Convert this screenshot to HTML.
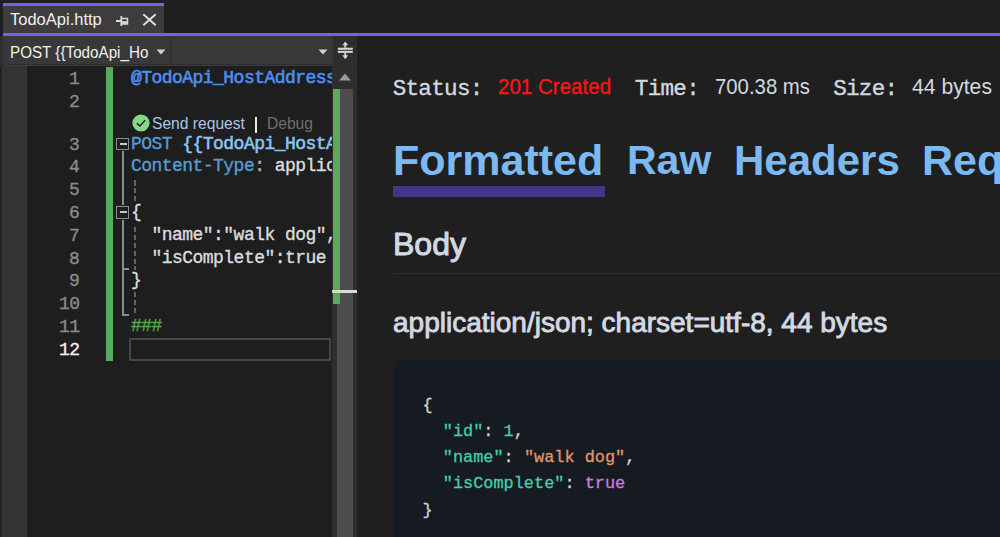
<!DOCTYPE html>
<html><head><meta charset="utf-8">
<style>
*{margin:0;padding:0;box-sizing:border-box}
html,body{width:1000px;height:537px;overflow:hidden;background:#1f1f1f}
body{position:relative;font-family:"Liberation Sans",sans-serif}
.a{position:absolute}
.t{position:absolute;white-space:pre;line-height:1}
.m{font-family:"Liberation Mono",monospace}
.code .t{-webkit-text-stroke:0.35px currentColor}
.code span{-webkit-text-stroke:0.35px currentColor}
.ds{background:repeating-linear-gradient(#636363 0 5.5px,transparent 5.5px 7.9px)}
</style></head><body>

<!-- tab strip -->
<div class="a" style="left:3px;top:3px;width:161px;height:30px;background:#3d3d3d;border-top:3px solid #7361e6"></div>
<div class="t" style="left:10px;top:11.2px;font-size:16.5px;color:#f0f0f0">TodoApi.http</div>
<!-- pin -->
<svg class="a" style="left:115px;top:15px" width="14" height="12" viewBox="0 0 14 12">
  <path d="M1 6H6" stroke="#d8d8d8" stroke-width="2"/>
  <path d="M6.3 1V11" stroke="#d8d8d8" stroke-width="1.8"/>
  <path d="M7 3.5H12.5V9H7" fill="none" stroke="#d8d8d8" stroke-width="1.5"/>
  <rect x="7" y="6.2" width="5.5" height="2.8" fill="#d8d8d8"/>
</svg>
<!-- close -->
<svg class="a" style="left:142px;top:13px" width="15" height="14" viewBox="0 0 15 14">
  <path d="M1.3 1.3L13.7 12.3M13.7 1.3L1.3 12.3" fill="none" stroke="#e0e0e0" stroke-width="1.9"/>
</svg>
<div class="a" style="left:3px;top:33px;width:997px;height:3px;background:#7361e6"></div>

<!-- nav bar -->
<div class="a" style="left:0;top:36px;width:357px;height:31px;background:#2e2e2e"></div>
<div class="a" style="left:3px;top:65px;width:354px;height:1px;background:#3c3c3c"></div>
<div class="a" style="left:3px;top:36px;width:167px;height:28px;background:#383838"></div>
<div class="a" style="left:171px;top:36px;width:161px;height:28px;background:#383838"></div>
<div class="a" style="left:332px;top:36px;width:25px;height:30px;background:#2d2d2d"></div>
<div class="t" style="left:10px;top:43.8px;font-size:17.2px;color:#f0f0f0;transform:scaleX(0.885);transform-origin:0 0">POST {{TodoApi_Ho</div>
<svg class="a" style="left:156px;top:49px" width="10" height="6"><path d="M0.5 0.5H9.5L5 5.5Z" fill="#d0d0d0"/></svg>
<svg class="a" style="left:317.5px;top:49px" width="10" height="6"><path d="M0.5 0.5H9.5L5 5.5Z" fill="#d0d0d0"/></svg>
<!-- splitter icon -->
<div class="a" style="left:332px;top:36px;width:1px;height:29px;background:#383838"></div>
<svg class="a" style="left:334px;top:38px" width="24" height="24" viewBox="0 0 24 24" fill="#d4d4d4">
  <rect x="3.8" y="9.7" width="15" height="2.1"/>
  <rect x="3.8" y="12.8" width="15" height="2.1"/>
  <rect x="10.3" y="6" width="1.9" height="3.7"/>
  <path d="M8.3 7.3L11.25 3.4L14.2 7.3Z"/>
  <rect x="10.3" y="14.9" width="1.9" height="3.7"/>
  <path d="M8.3 17.3L11.25 21.2L14.2 17.3Z"/>
</svg>

<!-- editor -->
<div class="a" style="left:3px;top:66px;width:24px;height:471px;background:#333333"></div>
<div class="a" style="left:27px;top:66px;width:305px;height:471px;background:#1e1e1e"></div>
<div class="a" style="left:0;top:66px;width:2px;height:471px;background:#222222"></div>
<div class="a" style="left:2px;top:66px;width:1px;height:471px;background:#3a3a3a"></div>
<!-- green change bar -->
<div class="a" style="left:106px;top:67px;width:7px;height:294px;background:#57ab5a"></div>

<!-- line numbers -->
<div class="m code" style="position:absolute;left:0;top:0;font-size:18px;letter-spacing:-0.54px;color:#8a8a8a">
<div class="t" style="left:69px;top:70.2px">1</div>
<div class="t" style="left:69px;top:92.6px">2</div>
<div class="t" style="left:69px;top:135.6px">3</div>
<div class="t" style="left:69px;top:158.4px">4</div>
<div class="t" style="left:69px;top:181.2px">5</div>
<div class="t" style="left:69px;top:204.0px">6</div>
<div class="t" style="left:69px;top:226.8px">7</div>
<div class="t" style="left:69px;top:249.6px">8</div>
<div class="t" style="left:69px;top:272.4px">9</div>
<div class="t" style="left:59px;top:295.2px">10</div>
<div class="t" style="left:59px;top:318.0px">11</div>
<div class="t" style="left:59px;top:340.8px;color:#f0f0f0">12</div>
</div>

<!-- code -->
<div class="a" style="left:0;top:0;width:332px;height:537px;overflow:hidden">
<div class="m code" style="position:absolute;left:0;top:0;font-size:18px;letter-spacing:-0.54px;color:#dcdcdc">
<div class="t" style="left:131px;top:69.2px;color:#4d8ef0;-webkit-text-stroke:0.6px #4d8ef0">@TodoApi_HostAddress</div>
<div class="t" style="left:131px;top:134.6px"><span style="color:#569cd6">POST </span><span style="color:#8cc4f6;-webkit-text-stroke:0.55px #8cc4f6">{{TodoApi_HostAddress}}</span></div>
<div class="t" style="left:131px;top:157.4px"><span style="color:#569cd6">Content-Type</span><span style="color:#b4b4b4">: </span>application/json</div>
<div class="t" style="left:131px;top:203.0px">{</div>
<div class="t" style="left:131px;top:225.8px">  "name":"walk dog",</div>
<div class="t" style="left:131px;top:248.6px">  "isComplete":true</div>
<div class="t" style="left:131px;top:271.4px">}</div>
<div class="t" style="left:131px;top:317.0px;color:#57a64a">###</div>
</div>
</div>
<!-- codelens -->
<svg class="a" style="left:132px;top:114px" width="18" height="18" viewBox="0 0 18 18">
  <circle cx="9" cy="9" r="8.6" fill="#86d986"/>
  <path d="M4.8 9.2L7.8 12L13.2 6.2" fill="none" stroke="#1e1e1e" stroke-width="1.5"/>
</svg>
<div class="t" style="left:152px;top:115.3px;font-size:16.2px;color:#a9c6e6;transform:scaleX(0.965);transform-origin:0 0">Send request</div>
<div class="a" style="left:255px;top:116.5px;width:2px;height:16px;background:#e8e8e8"></div>
<div class="t" style="left:266.5px;top:115.3px;font-size:16.2px;color:#6e6e6e;transform:scaleX(0.963);transform-origin:0 0">Debug</div>

<!-- folding -->
<div class="a" style="left:116.3px;top:137.9px;width:12.7px;height:12.1px;border:1.7px solid #8c8c8c"></div>
<div class="a" style="left:119.6px;top:142.9px;width:7.3px;height:1.9px;background:#c8c8c8"></div>
<div class="a" style="left:116.3px;top:205.9px;width:12.7px;height:12.8px;border:1.7px solid #8c8c8c"></div>
<div class="a" style="left:119.6px;top:211.3px;width:7.3px;height:1.9px;background:#c8c8c8"></div>
<div class="a" style="left:122px;top:151px;width:1.9px;height:54px;background:#8c8c8c"></div>
<div class="a" style="left:122px;top:219.6px;width:1.9px;height:96px;background:#8c8c8c"></div>
<div class="a" style="left:122px;top:268.3px;width:7px;height:1.8px;background:#8c8c8c"></div>
<div class="a" style="left:122px;top:314.3px;width:7px;height:1.8px;background:#8c8c8c"></div>
<div class="a ds" style="left:133.5px;top:180px;width:2.5px;height:21px"></div>
<div class="a ds" style="left:133.5px;top:226.8px;width:2.5px;height:43px"></div>
<div class="a ds" style="left:133.5px;top:292px;width:2.5px;height:24px"></div>
<!-- current line box -->
<div class="a" style="left:129px;top:338px;width:202px;height:23px;border:2px solid #464646"></div>

<!-- scrollbar column -->
<div class="a" style="left:332px;top:66px;width:25px;height:471px;background:#2e2e2e"></div>
<svg class="a" style="left:338px;top:73px" width="14" height="8"><path d="M1 7.5H13L7 0.5Z" fill="#9a9a9a"/></svg>
<div class="a" style="left:337px;top:89px;width:16px;height:448px;background:#4d4d4d"></div>
<div class="a" style="left:333px;top:89px;width:7px;height:215px;background:#57ab5a"></div>
<div class="a" style="left:332px;top:290px;width:25px;height:3px;background:#d8d8d8"></div>

<!-- right panel -->
<div class="m" style="position:absolute;left:0;top:0;font-size:22.6px;letter-spacing:-0.72px;color:#d2d8e0;-webkit-text-stroke:0.35px #d2d8e0">
<div class="t" style="left:392.7px;top:77.7px">Status:</div>
<div class="t" style="left:634.8px;top:77.7px">Time:</div>
<div class="t" style="left:833.2px;top:77.7px">Size:</div>
</div>
<div style="position:absolute;left:0;top:0;font-size:22.5px;color:#d2d8e0">
<div class="t" style="left:498px;top:76.0px;color:#ff1414;transform:scaleX(0.913);transform-origin:0 0;-webkit-text-stroke:0.3px #ff1414">201 Created</div>
<div class="t" style="left:714.5px;top:76.0px;transform:scaleX(0.904);transform-origin:0 0">700.38 ms</div>
<div class="t" style="left:911.5px;top:76.0px;transform:scaleX(0.94);transform-origin:0 0">44 bytes</div>
</div>

<div style="position:absolute;left:0;top:0;font-weight:bold;color:#7cb9f0">
<div class="t" style="left:393px;top:138.9px;font-size:43px">Formatted</div>
<div class="t" style="left:627px;top:140.3px;font-size:41px">Raw</div>
<div class="t" style="left:734px;top:139.6px;font-size:42px">Headers</div>
<div class="t" style="left:922px;top:138.9px;font-size:43px">Request</div>
</div>
<div class="a" style="left:393px;top:186px;width:212px;height:11px;background:#433685"></div>

<div class="t" style="left:393px;top:227.9px;font-size:32px;color:#d2d9e2;-webkit-text-stroke:1px #d2d9e2">Body</div>
<div class="a" style="left:393px;top:273px;width:607px;height:1px;background:#272a2e"></div>
<div class="t" style="left:393px;top:309px;font-size:28px;color:#d2d9e2;-webkit-text-stroke:0.9px #d2d9e2">application/json; charset=utf-8, 44 bytes</div>

<div class="a" style="left:393px;top:360px;width:650px;height:220px;background:#161b22;border-radius:6px"></div>
<div class="m" style="position:absolute;left:0;top:0;font-size:16.9px;color:#d4d4d4;-webkit-text-stroke:0.3px currentColor">
<div class="t" style="left:422.5px;top:397.8px">{</div>
<div class="t" style="left:422.5px;top:424.0px">  <span style="color:#45cdac">"id"</span>: <span style="color:#45cdac">1</span>,</div>
<div class="t" style="left:422.5px;top:450.2px">  <span style="color:#45cdac">"name"</span>: <span style="color:#e0966c">"walk dog"</span>,</div>
<div class="t" style="left:422.5px;top:476.4px">  <span style="color:#45cdac">"isComplete"</span>: <span style="color:#cc7bd8">true</span></div>
<div class="t" style="left:422.5px;top:502.6px">}</div>
</div>

</body></html>
